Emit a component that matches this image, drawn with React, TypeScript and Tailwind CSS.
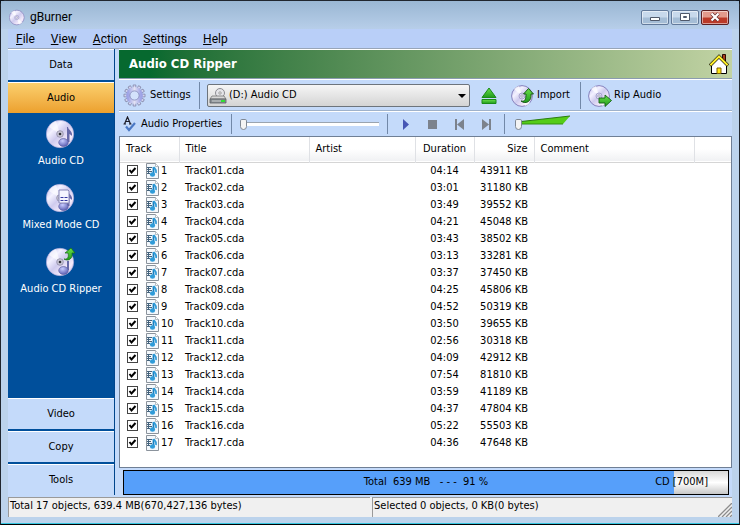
import { useState } from 'react';
import type { ReactNode } from 'react';
import clsx from 'clsx';

type Track = { id: number; duration: string; size: number };

const tracks: Track[] = [
    { id: 1, duration: '04:14', size: 43911 },
    { id: 2, duration: '03:01', size: 31180 },
    { id: 3, duration: '03:49', size: 39552 },
    { id: 4, duration: '04:21', size: 45048 },
    { id: 5, duration: '03:43', size: 38502 },
    { id: 6, duration: '03:13', size: 33281 },
    { id: 7, duration: '03:37', size: 37450 },
    { id: 8, duration: '04:25', size: 45806 },
    { id: 9, duration: '04:52', size: 50319 },
    { id: 10, duration: '03:50', size: 39655 },
    { id: 11, duration: '02:56', size: 30318 },
    { id: 12, duration: '04:09', size: 42912 },
    { id: 13, duration: '07:54', size: 81810 },
    { id: 14, duration: '03:59', size: 41189 },
    { id: 15, duration: '04:37', size: 47804 },
    { id: 16, duration: '05:22', size: 55503 },
    { id: 17, duration: '04:36', size: 47648 },
];

const menus = ['File', 'View', 'Action', 'Settings', 'Help'];

const gearTeeth = Array.from({ length: 12 }, (_, i) => i * 30);

// Shared gradients, referenced by id from every disc on the page
function Gradients() {
    return (
        <svg className="absolute size-0" aria-hidden="true">
            <defs>
                <linearGradient id="disc" x1="0" y1="0" x2="1" y2="1">
                    <stop offset="0" stopColor="#b9b6ea" />
                    <stop offset="0.3" stopColor="#f3f1ff" />
                    <stop offset="0.5" stopColor="#cfcbee" />
                    <stop offset="0.75" stopColor="#f6ecfb" />
                    <stop offset="1" stopColor="#b3abe0" />
                </linearGradient>
                <linearGradient id="leaf" x1="0" y1="0" x2="0" y2="1">
                    <stop offset="0" stopColor="#6be04a" />
                    <stop offset="1" stopColor="#1f9a1c" />
                </linearGradient>
                <linearGradient id="gear" x1="0" y1="0" x2="1" y2="0">
                    <stop offset="0" stopColor="#9ea3e6" />
                    <stop offset="0.5" stopColor="#e2e2f4" />
                    <stop offset="1" stopColor="#9ea3e6" />
                </linearGradient>
                <radialGradient id="ball" cx="0.4" cy="0.3" r="0.8">
                    <stop offset="0" stopColor="#c9ccff" />
                    <stop offset="1" stopColor="#4d50a8" />
                </radialGradient>
            </defs>
        </svg>
    );
}

function Disc({ children, className }: { children?: ReactNode; className?: string }) {
    return (
        <svg viewBox="0 0 24 24" className={className} aria-hidden="true">
            <circle cx="11" cy="12" r="10.4" fill="url(#disc)" stroke="#8682bd" strokeWidth="1" />
            <path d="M11 12 3 5a10 10 0 0 1 5-3Z" fill="#fff" opacity="0.7" />
            <path d="m11 12 8 7a10 10 0 0 1-5 3Z" fill="#fff" opacity="0.7" />
            <circle cx="11" cy="12" r="3" fill="#dddaf2" stroke="#9a96c6" strokeWidth="0.8" />
            <circle cx="11" cy="12" r="1.2" fill="#fff" stroke="#77749c" strokeWidth="0.6" />
            {children}
        </svg>
    );
}

// Large sidebar disc with a note on it
function NoteDisc({ kind }: { kind: 'note' | 'mixed' | 'rip' }) {
    return (
        <svg viewBox="0 0 30 30" className="size-[30px]" aria-hidden="true">
            <circle cx="14" cy="15" r="13.7" fill="url(#disc)" stroke="#a8a4d8" strokeWidth="0.6" />
            <path d="M14 15 3 8a13 13 0 0 1 7-6Z" fill="#fff" opacity="0.6" />
            <circle cx="14" cy="15" r="3.3" fill="#c8c5d6" stroke="#8f8ca6" strokeWidth="0.8" />
            <circle cx="14" cy="15" r="1.3" fill="#303038" />
            {kind !== 'rip' && <path d="M22 8c0 3 5 4 4 9-1-1-2-2-2.5-2v8H21V8Z" fill="#6668a8" />}
            {kind === 'rip' && <path d="M21 14h2v9h-2Z" fill="#6668a8" />}
            <ellipse cx="17.5" cy="23.5" rx="4.8" ry="4" fill="url(#ball)" stroke="#5a5a9a" strokeWidth="0.6" />
            {kind === 'mixed' && (
                <>
                    <path d="M13 7h9l1 1v12H13Z" fill="#f4f4ff" stroke="#8887b8" strokeWidth="1" />
                    <path d="M14.5 14.5h3M18.5 14.5h3M14.5 17.5h3M18.5 17.5h3" stroke="#3236a0" strokeWidth="1.2" />
                </>
            )}
            {kind === 'rip' && (
                <path d="M18 12c4 1 5-3 4-6h-3l6-5 4 5h-3c1 5-3 9-8 6Z" fill="url(#leaf)" stroke="#126b10" strokeWidth="0.7" />
            )}
        </svg>
    );
}

function GearIcon() {
    return (
        <svg viewBox="0 0 24 24" className="size-[23px]" aria-hidden="true">
            {gearTeeth.map((angle) => (
                <path
                    key={angle}
                    d="M10.6 5V1h2.8v4"
                    transform={`rotate(${angle} 12 12)`}
                    fill="#d2d5f2"
                    stroke="#777a9c"
                    strokeWidth="0.7"
                />
            ))}
            <circle cx="12" cy="12" r="6.6" fill="none" stroke="url(#gear)" strokeWidth="4.4" />
            <circle cx="12" cy="12" r="4.8" fill="#d3e2fb" stroke="#7478ac" strokeWidth="0.7" />
        </svg>
    );
}

function HomeIcon() {
    return (
        <svg viewBox="0 0 20 22" className="h-[22px] w-5" aria-hidden="true">
            <path d="M13.5 1.5h3v7h-3Z" fill="#a8401c" stroke="#2a0800" />
            <path d="M2.5 11.5v9h15v-9L10 4Z" fill="#fff" stroke="#000" />
            <path d="M1 12.5 10 3.5l9 9" fill="none" stroke="#000" strokeWidth="3.2" />
            <path d="M1.3 12.2 10 3.5l8.700 8.700" fill="none" stroke="#fff02a" strokeWidth="2.1" />
            <path d="M8 15h4v5.5H8Z" fill="#ffe810" stroke="#806000" />
        </svg>
    );
}

function DriveIcon() {
    return (
        <svg viewBox="0 0 18 16" className="pointer-events-none absolute left-0.5 top-1 h-4 w-[18px]" aria-hidden="true">
            <circle cx="11" cy="5" r="4.5" fill="#e4e4e8" stroke="#8c8c92" />
            <circle cx="11" cy="5" r="1.2" fill="#fff" stroke="#777" strokeWidth="0.7" />
            <path d="M3 8h12l2 3H1Z" fill="#d8d8d8" stroke="#777" strokeWidth="0.8" />
            <path d="M1 11h16v4H1Z" fill="#8a8f94" stroke="#5c6064" strokeWidth="0.8" />
            <path d="M3 13h10" stroke="#c8cccc" />
            <path d="M12 13h4" stroke="#32e032" strokeWidth="2" />
        </svg>
    );
}

function TrackIcon() {
    return (
        <svg viewBox="0 0 13 16" className="h-4 w-[13px]" aria-hidden="true">
            <path d="M0.5 0.5h9l3 3v12h-12Z" fill="#f4f8fc" stroke="#8b939c" />
            <path d="M9.5 0.5v3h3" fill="#fff" stroke="#a5adb5" strokeWidth="0.8" />
            <path d="M1 4.5h5M1 6.5h4M1 8.5h5M1 10.5h3M2.5 4.5v6" stroke="#44637d" strokeWidth="1" />
            <path d="M7.5 4v7" stroke="#187fc0" strokeWidth="1.8" />
            <path d="M7.5 4c1 2 3.5 2 2.5 6" fill="none" stroke="#2f9bd8" strokeWidth="1.8" />
            <ellipse cx="6.5" cy="11.5" rx="2.6" ry="2.2" fill="#2f9bd8" />
        </svg>
    );
}

function PropertiesIcon() {
    return (
        <svg viewBox="0 0 14 16" className="h-4 w-3.5" aria-hidden="true">
            <path d="m1.5 8 3-7 3 7M2.5 5.5h4M0.5 8H3M6 8h2.5" fill="none" stroke="#1c1c28" strokeWidth="1.2" />
            <path d="m3 10.5 3 3.5 6-7" fill="none" stroke="#4b78c4" strokeWidth="2.2" />
        </svg>
    );
}

function Separator() {
    return <div className="w-px shrink-0 self-stretch bg-[#7288a8]" />;
}

function SideTab({ label, active }: { label: string; active?: boolean }) {
    return (
        <button
            type="button"
            className={clsx(
                'h-[31px] w-full shrink-0 border-t border-white',
                active ? 'bg-linear-to-b from-[#fbd06c] to-[#eca02c]' : 'bg-[#c4dafa]',
            )}
        >
            {label}
        </button>
    );
}

function SideItem({ label, kind }: { label: string; kind: 'note' | 'mixed' | 'rip' }) {
    return (
        <button type="button" className="flex h-16 w-full flex-col items-center gap-1 text-white">
            <NoteDisc kind={kind} />
            <span className="leading-4">{label}</span>
        </button>
    );
}

function WindowButton({ label, close, children }: { label: string; close?: boolean; children: ReactNode }) {
    return (
        <button
            type="button"
            aria-label={label}
            className={clsx(
                'flex h-[15px] w-7 items-center justify-center rounded-xs border shadow-[inset_0_0_0_1px_rgba(255,255,255,0.5)]',
                close
                    ? 'border-[#5a1f22] bg-linear-to-b from-[#e29a8c] from-45% to-[#bb3a28] to-55%'
                    : 'border-[#62799a] bg-linear-to-b from-[#c8d9ec] from-45% to-[#a5bdd6] to-55%',
            )}
        >
            <svg viewBox="0 0 12 10" className="h-2.5 w-3" aria-hidden="true">
                {children}
            </svg>
        </button>
    );
}

function TitleBar() {
    return (
        <header className="flex h-7 shrink-0 items-center bg-linear-to-b from-[#9ab7d3] to-[#b7cee9] pl-2 pr-2.5 pt-1">
            <Disc className="size-[17px]" />
            <h1 className="ml-1 font-[Roboto,sans-serif] text-xs text-black">gBurner</h1>
            <div className="ml-auto flex gap-0.5">
                <WindowButton label="Minimize">
                    <path d="M1.5 5.5h9v3h-9Z" fill="#fff" stroke="#50596a" />
                </WindowButton>
                <WindowButton label="Maximize">
                    <path d="M1.5 1.5h9v7h-9ZM4.5 4.5v1h3v-1Z" fill="#fff" fillRule="evenodd" stroke="#50596a" />
                </WindowButton>
                <WindowButton label="Close" close>
                    <path d="m2.5 1.5 7 7m0-7-7 7" stroke="#6a3030" strokeWidth="3.6" />
                    <path d="m2.5 1.5 7 7m0-7-7 7" stroke="#fff" strokeWidth="2.2" />
                </WindowButton>
            </div>
        </header>
    );
}

function Sidebar() {
    return (
        <aside className="flex w-[107px] shrink-0 flex-col gap-0.5 border-r border-[#00458c] bg-[#004f9b]">
            <SideTab label="Data" />
            <SideTab label="Audio" active />
            <div className="flex-1 pt-1">
                <SideItem label="Audio CD" kind="note" />
                <SideItem label="Mixed Mode CD" kind="mixed" />
                <SideItem label="Audio CD Ripper" kind="rip" />
            </div>
            <SideTab label="Video" />
            <SideTab label="Copy" />
            <SideTab label="Tools" />
        </aside>
    );
}

function MainToolbar() {
    return (
        <div className="flex h-8 shrink-0 items-center border-t border-white py-0.5 pl-1">
            <button type="button" className="flex w-[76px] items-center gap-1">
                <GearIcon />
                Settings
            </button>
            <Separator />
            <div className="relative mx-[7px] w-[263px]">
                <DriveIcon />
                <select
                    aria-label="Drive"
                    className="h-[23px] w-full appearance-none rounded-xs border border-[#6d747c] bg-linear-to-b from-[#f6f6f6] to-[#d4d4d4] pl-[21px]"
                >
                    <option>(D:) Audio CD</option>
                </select>
                <svg viewBox="0 0 8 4" className="pointer-events-none absolute right-1 top-2.5 h-1 w-2" aria-hidden="true">
                    <path d="M0 0h8L4 4Z" fill="#000" />
                </svg>
            </div>
            <button type="button" aria-label="Eject" className="ml-1 flex w-[30px]">
                <svg viewBox="0 0 16 18" className="h-[18px] w-4" aria-hidden="true">
                    <path d="m8 1 7 9.5H1Z" fill="url(#leaf)" stroke="#1a8a18" />
                    <path d="M1 12.5h14v4H1Z" fill="url(#leaf)" stroke="#1a8a18" />
                </svg>
            </button>
            <button type="button" className="flex w-[69px] items-center gap-0.5">
                <Disc className="size-6">
                    <path d="M10 17c4 1 5-2 5-7h-2.500l5-5.500L22.500 10H20c1 7-5 11-10 7Z" fill="url(#leaf)" stroke="#134f14" strokeWidth="0.9" />
                </Disc>
                Import
            </button>
            <Separator />
            <button type="button" className="ml-[7px] flex items-center gap-0.5">
                <Disc className="size-6">
                    <path d="M11 14h6v-3l6.5 5.5L17 22.5V19h-6Z" fill="url(#leaf)" stroke="#135f14" strokeWidth="0.9" />
                </Disc>
                Rip Audio
            </button>
        </div>
    );
}

function PlayerButton({ label, d, blue }: { label: string; d: string; blue?: boolean }) {
    return (
        <button type="button" aria-label={label} className="flex w-[27px] justify-center">
            <svg viewBox="0 0 11 11" className="size-[11px]" aria-hidden="true">
                <path d={d} fill={blue ? '#4656b4' : '#7c828c'} />
            </svg>
        </button>
    );
}

const thumb =
    'appearance-none bg-transparent [&::-webkit-slider-thumb]:h-[11px] [&::-webkit-slider-thumb]:w-[7px] [&::-webkit-slider-thumb]:appearance-none [&::-webkit-slider-thumb]:rounded-xs [&::-webkit-slider-thumb]:rounded-b-sm [&::-webkit-slider-thumb]:border [&::-webkit-slider-thumb]:border-[#7f8894] [&::-webkit-slider-thumb]:bg-[#f4f4f4]';

function PlayerBar() {
    return (
        <div className="flex h-[25px] shrink-0 items-center border-t border-white py-0.5 pl-1 shadow-[0_-1px_0_#9fb2cb]">
            <button type="button" className="flex w-[108px] items-center gap-1">
                <PropertiesIcon />
                Audio Properties
            </button>
            <Separator />
            <div className="relative ml-2 flex w-[139px] items-center">
                <div className="absolute inset-x-0 h-1 border-t border-[#9aa4b0] bg-white" />
                <input type="range" aria-label="Position" defaultValue={0} className={clsx('relative h-3 w-full', thumb)} />
            </div>
            <div className="ml-2 mr-1 flex self-stretch">
                <Separator />
            </div>
            <PlayerButton label="Play" blue d="M3 0v11l6-5.5Z" />
            <PlayerButton label="Stop" d="M1 1h9v9H1Z" />
            <PlayerButton label="Previous" d="M1 0h2v11H1ZM10 0v11L3 5.5Z" />
            <PlayerButton label="Next" d="M8 0h2v11H8ZM1 0v11l7-5.5Z" />
            <div className="ml-1 flex self-stretch">
                <Separator />
            </div>
            <div className="relative ml-2.5 flex w-14 items-center">
                <svg viewBox="0 0 56 12" className="absolute bottom-1 h-3 w-14" aria-hidden="true">
                    <path d="M2 8 55 2 48 10 2 10Z" fill="#55cc18" />
                    <path d="M2 8 55 2" stroke="#2a7c10" />
                    <path d="M2 10h46" stroke="#359010" />
                </svg>
                <input type="range" aria-label="Volume" defaultValue={0} className={clsx('relative h-3 w-full', thumb)} />
            </div>
        </div>
    );
}

function TrackTable() {
    const [checked, setChecked] = useState<number[]>(tracks.map((t) => t.id));

    const toggle = (id: number) => {
        setChecked((prev) => (prev.includes(id) ? prev.filter((x) => x !== id) : [...prev, id]));
    };

    const th = 'border-r border-[#dfe1e5] font-normal';

    return (
        <div className="flex-1 border border-[#6f7f95] bg-white">
            <table className="w-full table-fixed border-collapse">
                <colgroup>
                    <col className="w-[59px]" />
                    <col className="w-[130px]" />
                    <col className="w-[106px]" />
                    <col className="w-[59px]" />
                    <col className="w-[60px]" />
                    <col className="w-40" />
                    <col />
                </colgroup>
                <thead>
                    <tr className="h-[25px] border-b border-[#d5d5d5] bg-linear-to-b from-white from-50% to-[#f0f1f3]">
                        <th className={clsx(th, 'pl-1.5 text-left')}>Track</th>
                        <th className={clsx(th, 'pl-1.5 text-left')}>Title</th>
                        <th className={clsx(th, 'pl-1.5 text-left')}>Artist</th>
                        <th className={clsx(th, 'text-center')}>Duration</th>
                        <th className={clsx(th, 'pr-1.5 text-right')}>Size</th>
                        <th className={clsx(th, 'pl-1.5 text-left')}>Comment</th>
                        <td />
                    </tr>
                </thead>
                <tbody>
                    {tracks.map((track) => (
                        <tr key={track.id} className="h-[17px] leading-4">
                            <td className="pl-[7px]">
                                <label className="flex items-center">
                                    <span className="relative flex">
                                        <input
                                            type="checkbox"
                                            checked={checked.includes(track.id)}
                                            onChange={() => toggle(track.id)}
                                            className="peer size-[11px] appearance-none border border-[#444] bg-white"
                                        />
                                        <svg
                                            viewBox="0 0 11 11"
                                            className="pointer-events-none invisible absolute inset-0 size-[11px] peer-checked:visible"
                                            aria-hidden="true"
                                        >
                                            <path d="m2.5 5 2 2.5 4-4.5" fill="none" stroke="#000" strokeWidth="2" />
                                        </svg>
                                    </span>
                                    <span className="ml-2 mr-0.5">
                                        <TrackIcon />
                                    </span>
                                    {track.id}
                                </label>
                            </td>
                            <td className="pl-1.5">Track{String(track.id).padStart(2, '0')}.cda</td>
                            <td />
                            <td className="text-center">{track.duration}</td>
                            <td className="pr-1.5 text-right">{track.size} KB</td>
                            <td />
                            <td />
                        </tr>
                    ))}
                </tbody>
            </table>
        </div>
    );
}

function CapacityBar({ percent }: { percent: number }) {
    return (
        <div
            role="progressbar"
            aria-label="Disc capacity"
            aria-valuenow={percent}
            className="relative ml-1 mr-[3px] mt-0.5 flex h-[25px] shrink-0 items-center justify-center border border-black bg-linear-to-b from-[#d8d8d8] via-white to-[#c8c8c8]"
        >
            <div className="absolute inset-y-0 left-0 bg-[#569ffa]" style={{ width: `${percent}%` }} />
            <span className="relative whitespace-pre">Total  639 MB   - - -  91 %</span>
            <span className="absolute right-5">CD [700M]</span>
        </div>
    );
}

function StatusBar() {
    return (
        <footer className="flex h-5 shrink-0 gap-0.5 bg-[#f0f0f0] text-black">
            <div className="w-1/2 border-l border-t border-[#9a9a9a] pl-px leading-4">Total 17 objects, 639.4 MB(670,427,136 bytes)</div>
            <div className="flex flex-1 items-end justify-between border-l border-t border-[#9a9a9a] pl-px leading-4">
                <span className="self-start">Selected 0 objects, 0 KB(0 bytes)</span>
                <svg viewBox="0 0 14 14" className="size-3.5" aria-hidden="true">
                    <path d="M0 14 14 0M4 14 14 4M8 14l6-6M12 14l2-2" stroke="#8c8c8c" strokeWidth="1.3" />
                </svg>
            </div>
        </footer>
    );
}

export default function App() {
    return (
        <div className="min-h-screen bg-[#10151c]">
            <Gradients />
            <div className="flex min-h-screen flex-col rounded-t-md border border-[#20262e] border-b-black bg-[#bcd3ec] font-['DejaVu_Sans_Condensed',Tahoma,sans-serif] text-[11px] text-black">
                <TitleBar />
                <div className="mx-[7px] mb-1.5 flex flex-1 flex-col bg-[#c4dafa]">
                    <nav className="flex h-5 shrink-0 items-center gap-4 border-b border-[#98a5b8] bg-[#b9cff8] pl-2 font-[Roboto,sans-serif] text-xs">
                        {menus.map((menu) => (
                            <button key={menu} type="button">
                                <span className="underline">{menu[0]}</span>
                                {menu.slice(1)}
                            </button>
                        ))}
                    </nav>
                    <div className="flex flex-1 gap-1 pb-0.5">
                        <Sidebar />
                        <main className="flex flex-1 flex-col">
                            <div className="flex h-[30px] shrink-0 items-center justify-between border-y border-t-white border-b-[#8b9cb0] bg-linear-to-r from-[#06692f] from-5% to-[#c2d3a4] pl-2.5 pr-[3px]">
                                <h2 className="text-[13px] font-bold text-white">Audio CD Ripper</h2>
                                <button type="button" aria-label="Home">
                                    <HomeIcon />
                                </button>
                            </div>
                            <MainToolbar />
                            <PlayerBar />
                            <TrackTable />
                            <CapacityBar percent={91} />
                        </main>
                    </div>
                    <StatusBar />
                </div>
                <div className="h-px shrink-0 bg-[#35c6e0]" />
            </div>
        </div>
    );
}
